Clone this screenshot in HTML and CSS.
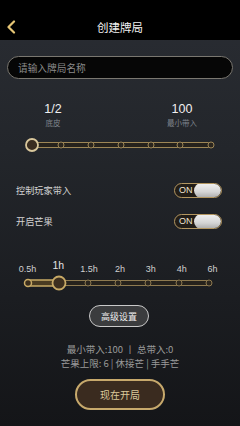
FILE: index.html
```html
<!DOCTYPE html>
<html lang="zh">
<head>
<meta charset="utf-8">
<link rel="stylesheet" href="styles.css">
</head>
<body>
<div class="screen">
  <header class="header">
    <svg class="back" width="12" height="14" viewBox="0 0 12 14"><path d="M9 1.5 L3.5 7 L9 12.5" fill="none" stroke="#e6c676" stroke-width="2.2" stroke-linecap="round" stroke-linejoin="round"/></svg>
    <h1 class="title">创建牌局</h1>
    <span></span>
  </header>
  <main class="content">
    <div class="name-input">请输入牌局名称</div>
    <div class="blinds">
      <div class="blind"><div class="num">1/2</div><div class="cap">底皮</div></div>
      <div class="blind"><div class="num">100</div><div class="cap">最小带入</div></div>
    </div>
    <svg class="slider slider-one" width="240" height="16" viewBox="0 137 240 16">
      <rect x="32" y="142.5" width="179" height="5" rx="2.5" fill="#26221c" stroke="#9d8656" stroke-width="1"/>
      <g fill="#2a251e" stroke="#9d8656" stroke-width="1">
        <circle cx="61" cy="145" r="3"/><circle cx="91" cy="145" r="3"/><circle cx="121" cy="145" r="3"/>
        <circle cx="151" cy="145" r="3"/><circle cx="180" cy="145" r="3"/><circle cx="211" cy="145" r="3"/>
      </g>
      <circle cx="32" cy="145" r="6" fill="#3a2d20" stroke="#d9c79c" stroke-width="1.8"/>
    </svg>
    <div class="row row-first">
      <span class="label">控制玩家带入</span>
      <span class="toggle"><span class="on">ON</span><span class="knob"></span></span>
    </div>
    <div class="row row-second">
      <span class="label">开启芒果</span>
      <span class="toggle"><span class="on">ON</span><span class="knob"></span></span>
    </div>
    <div class="hours">
      <span>0.5h</span><span class="active">1h</span><span>1.5h</span><span>2h</span><span>3h</span><span>4h</span><span>6h</span>
    </div>
    <svg class="slider slider-two" width="240" height="18" viewBox="0 274 240 18">
      <rect x="28" y="280.5" width="182" height="5" rx="2.5" fill="#26221c" stroke="#8e7a50" stroke-width="1"/>
      <g fill="#2a251e" stroke="#8e7a50" stroke-width="1">
        <circle cx="88" cy="283" r="3"/><circle cx="118" cy="283" r="3"/><circle cx="148" cy="283" r="3"/>
        <circle cx="179" cy="283" r="3"/><circle cx="209" cy="283" r="3"/>
      </g>
      <rect x="28" y="280" width="32" height="6" rx="3" fill="#4a3c22" stroke="#c8aa66" stroke-width="1.5"/>
      <circle cx="28" cy="283" r="3.5" fill="#3a2d1c" stroke="#c8aa66" stroke-width="1.5"/>
      <circle cx="59" cy="283" r="6.5" fill="#3d2f1f" stroke="#c8aa66" stroke-width="1.8"/>
    </svg>
    <button class="adv">高级设置</button>
    <p class="summary">最小带入:100 丨 总带入:0<br>芒果上限: 6 | 休接芒 | 手手芒</p>
    <button class="start">现在开局</button>
  </main>
</div>
</body>
</html>
```
FILE: styles.css
```css
* { box-sizing: border-box; }
html, body { margin: 0; padding: 0; }
body {
  width: 240px;
  height: 426px;
  overflow: hidden;
  font-family: "Noto Sans CJK SC", "Noto Sans", sans-serif;
  background: #15171a;
}
.screen {
  width: 240px;
  height: 426px;
  display: flex;
  flex-direction: column;
  background: linear-gradient(180deg, #2a2d33 0%, #23262b 35%, #1b1d21 70%, #141518 100%);
}
.header {
  height: 40px;
  background: #000;
  display: grid;
  grid-template-columns: 30px 1fr 30px;
  align-items: center;
  padding-top: 14px;
}
.back { margin-left: 5px; }
.title {
  margin: 0;
  text-align: center;
  font-size: 11.5px;
  font-weight: 400;
  color: #f0f0f0;
  line-height: 26px;
}
.content {
  display: flex;
  flex-direction: column;
}
.name-input {
  margin: 16px 7px 0;
  height: 23px;
  border: 1.5px solid #7a7770;
  border-radius: 12px;
  background: #060606;
  padding-left: 10px;
  display: flex;
  align-items: center;
  font-size: 9.7px;
  color: #8a8a8a;
}
.blinds {
  margin-top: 22px;
  display: flex;
  justify-content: space-between;
  padding: 0 33px 0 28px;
}
.blind {
  width: 50px;
  text-align: center;
}
.num {
  font-family: "Liberation Sans", "Noto Sans", sans-serif;
  font-size: 12.5px;
  line-height: 16px;
  color: #f0f0f0;
}
.cap {
  font-size: 7.5px;
  line-height: 11px;
  color: #7f848c;
}
.slider { display: block; }
.slider-one { margin-top: 9px; }
.row {
  height: 16px;
  display: flex;
  align-items: center;
  justify-content: space-between;
  padding: 0 18px 0 16px;
}
.row-first { margin-top: 29px; }
.row-second { margin-top: 15px; }
.label {
  font-size: 9.2px;
  color: #d4d4d4;
}
.toggle {
  width: 48px;
  height: 15px;
  border: 1.5px solid #b39660;
  border-radius: 8px;
  background: #221d17;
  display: flex;
  align-items: center;
  overflow: hidden;
}
.on {
  font-family: "Liberation Sans", sans-serif;
  font-size: 9px;
  color: #efe6d2;
  padding-left: 4px;
}
.knob {
  margin-left: auto;
  width: 27px;
  height: 15px;
  border-radius: 8px;
  background: linear-gradient(180deg, #f2f2f2 0%, #d4d4d4 60%, #a9a9a9 100%);
}
.hours {
  margin: 29px 0 0 12px;
  width: 216px;
  display: grid;
  grid-template-columns: repeat(7, 1fr);
  align-items: end;
  text-align: center;
  font-family: "Liberation Sans", sans-serif;
  font-size: 9px;
  line-height: 12px;
  color: #d0d0d0;
}
.hours .active {
  font-size: 10.5px;
  line-height: 14px;
  margin-bottom: 3px;
  color: #e4e4e4;
}
.slider-two { margin-top: -1px; }
.adv {
  align-self: center;
  margin: 13px 0 0 -2px;
  width: 60px;
  height: 22px;
  border: 1.5px solid #c9c9c9;
  border-radius: 11px;
  background: #3b3c3e;
  color: #f0f0f0;
  font-family: "Noto Sans CJK SC", sans-serif;
  font-size: 9px;
  padding: 0;
}
.summary {
  margin: 15px 0 0;
  text-align: center;
  font-size: 9.5px;
  line-height: 14px;
  color: #9a9a9a;
}
.start {
  align-self: center;
  margin-top: 9px;
  width: 90px;
  height: 31px;
  border: 2px solid #c7a96c;
  border-radius: 16px;
  background: #3a2b1f;
  color: #dcc99b;
  font-family: "Noto Sans CJK SC", sans-serif;
  font-size: 10px;
  padding: 0;
}
```
